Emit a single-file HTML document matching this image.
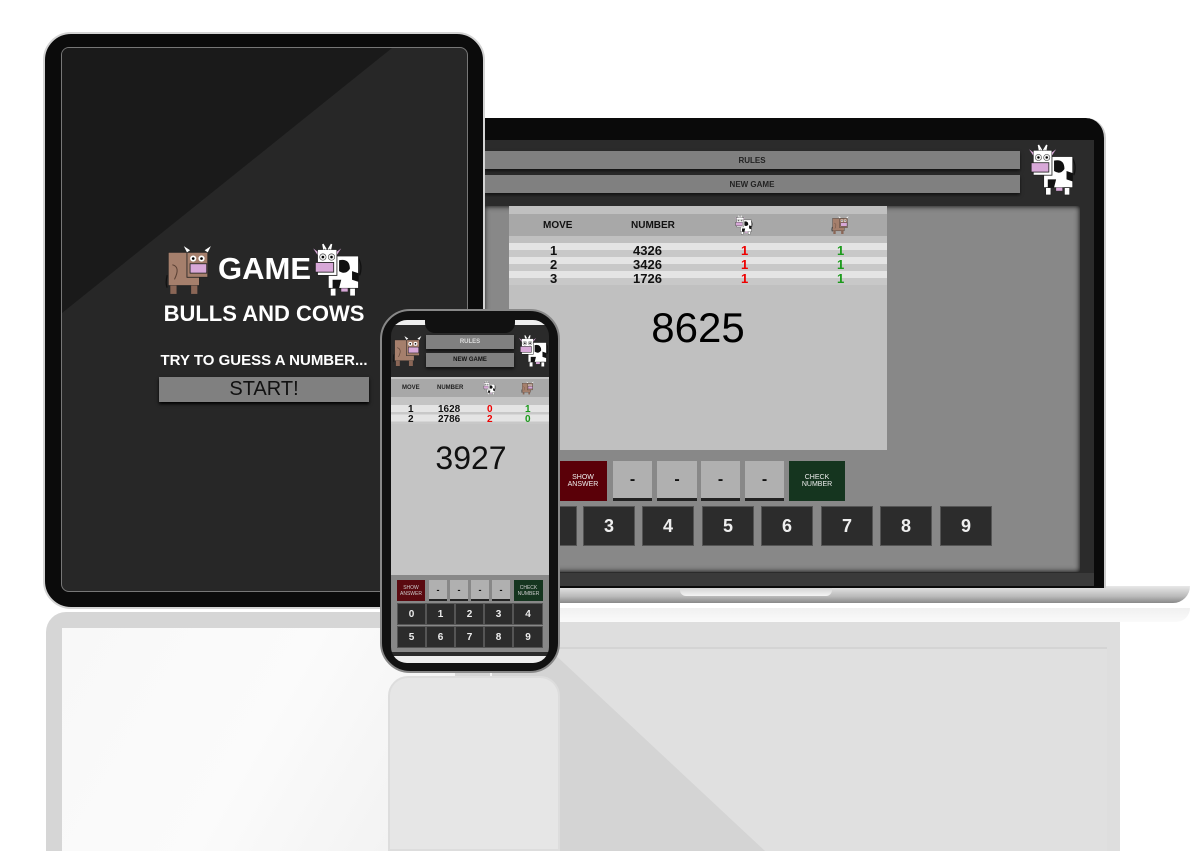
<!DOCTYPE html>
<html><head><meta charset="utf-8"><style>
*{margin:0;padding:0;box-sizing:border-box}
body{width:1203px;height:851px;background:#fff;position:relative;overflow:hidden;font-family:"Liberation Sans",sans-serif}
.a{position:absolute}
.c{display:flex;align-items:center;justify-content:center;text-align:center}
.bar{background:#808080;color:#222;font-weight:bold;box-shadow:0 2px 3px rgba(0,0,0,.6)}
.dig{background:#2c2c2c;color:#eee;font-weight:bold;border:1px solid #555}
.dash{background:#b0b0b0;border-bottom:3px solid #222;color:#111;font-weight:bold}
</style></head><body>
<svg width="0" height="0" style="position:absolute">
<defs>
<symbol id="bull" viewBox="0 0 46 50">
<path d="M3 30 Q1 38 3 42" stroke="#111" stroke-width="1.2" fill="none"/>
<rect x="4" y="8" width="30" height="32" fill="#a57f6c" stroke="#222" stroke-width=".8"/>
<path d="M8 20 Q16 22 10 34" stroke="#5a4034" fill="none" stroke-width="1"/>
<rect x="6" y="40" width="6" height="8" fill="#8a6656"/><rect x="26" y="40" width="6" height="8" fill="#8a6656"/>
<rect x="22" y="8" width="20" height="24" fill="#a57f6c" stroke="#222" stroke-width=".8"/>
<path d="M22 8 L19 2 L25 6Z M42 8 L45 2 L39 6Z" fill="#fff"/>
<circle cx="28" cy="14" r="3" fill="#fff"/><circle cx="36" cy="14" r="3" fill="#fff"/>
<circle cx="28" cy="14" r="1.3" fill="#000"/><circle cx="36" cy="14" r="1.3" fill="#000"/>
<rect x="25" y="19" width="16" height="9" fill="#d8a8d8" stroke="#222" stroke-width=".8"/>
</symbol>
<symbol id="cow" viewBox="0 0 46 50">
<path d="M42 14 Q46 22 43 30" stroke="#111" stroke-width="1.2" fill="none"/>
<rect x="14" y="12" width="28" height="30" fill="#fff" stroke="#222" stroke-width=".8"/>
<path d="M24 16 Q34 14 34 24 Q30 30 24 26Z M36 26 L42 28 L42 36 L36 34Z M18 34 L26 34 L24 42 L18 42Z" fill="#111"/>
<rect x="16" y="42" width="5" height="7" fill="#fff" stroke="#222" stroke-width=".6"/><rect x="34" y="42" width="5" height="7" fill="#fff" stroke="#222" stroke-width=".6"/>
<rect x="26" y="42" width="6" height="3" fill="#d8a8d8"/>
<rect x="4" y="6" width="18" height="24" fill="#fff" stroke="#222" stroke-width=".8"/>
<path d="M4 8 L0 5 L4 11Z M22 8 L26 5 L22 11Z" fill="#d8a8d8"/>
<path d="M10 6 L9 1 L12 6 M16 6 L17 1 L14 6" stroke="#fff" stroke-width="1.4"/>
<circle cx="9" cy="13" r="3" fill="#eee" stroke="#333" stroke-width=".5"/><circle cx="17" cy="13" r="3" fill="#eee" stroke="#333" stroke-width=".5"/>
<circle cx="9" cy="13" r="1.2" fill="#000"/><circle cx="17" cy="13" r="1.2" fill="#000"/>
<rect x="2" y="18" width="17" height="9" fill="#d8a8d8" stroke="#222" stroke-width=".8"/>
</symbol>
</defs></svg>

<!-- reflections -->
<div class="a" style="left:470px;top:608px;width:720px;height:14px;background:linear-gradient(#f0f0f0,#fafafa);border-radius:0 0 20px 0"></div>
<div class="a" style="left:470px;top:622px;width:650px;height:229px;background:#dedede"></div>
<div class="a" style="left:485px;top:647px;width:622px;height:204px;background:#e0e0e0;border-top:2px solid #d4d4d4"></div>
<svg class="a" style="left:0;top:0" width="1203" height="851"><polygon points="470,622 520,622 765,851 470,851" fill="#d4d4d4"/><line x1="491" y1="622" x2="491" y2="851" stroke="#f4f4f4" stroke-width="2"/></svg>
<div class="a" style="left:46px;top:612px;width:424px;height:239px;background:#d6d6d6;border-radius:20px 20px 0 0"></div>
<div class="a" style="left:62px;top:628px;width:393px;height:223px;background:linear-gradient(120deg,#f8f8f8,#fbfbfb 50%,#f0f0f0)"></div>
<div class="a" style="left:388px;top:676px;width:172px;height:175px;background:#e6e6e6;border:2px solid #ddd;border-radius:20px 20px 0 0"></div>

<!-- laptop -->
<div class="a" style="left:470px;top:586px;width:720px;height:17px;background:linear-gradient(#e8e8e8,#bbb 60%,#888);border-radius:0 0 40px 20px"></div>
<div class="a" style="left:680px;top:586px;width:152px;height:10px;background:linear-gradient(#ccc,#f4f4f4);border-radius:0 0 6px 6px"></div>
<div class="a" style="left:470px;top:118px;width:636px;height:470px;background:#0a0a0a;border-radius:0 20px 0 0;border-right:2px solid #ccc"></div>
<div class="a" style="left:484px;top:140px;width:610px;height:436px;background:#2b2b2b"></div>
<div class="a c bar" style="left:484px;top:151px;width:536px;height:18px;font-size:8px">RULES</div>
<div class="a c bar" style="left:484px;top:175px;width:536px;height:18px;font-size:8px">NEW GAME</div>
<svg class="a" style="left:1029px;top:144px" width="48" height="52"><use href="#cow"/></svg>
<div class="a" style="left:484px;top:206px;width:596px;height:366px;background:#888;box-shadow:inset 0 0 6px #000"></div>
<div class="a" style="left:509px;top:206px;width:378px;height:244px;background:#c0c0c0"></div>
<div class="a" style="left:509px;top:214px;width:378px;height:22px;background:#a8a8a8;font-size:10px;font-weight:bold;color:#111">
<span class="a" style="left:34px;top:6px">MOVE</span><span class="a" style="left:122px;top:6px">NUMBER</span>
<svg class="a" style="left:226px;top:1px" width="18" height="20"><use href="#cow"/></svg>
<svg class="a" style="left:322px;top:1px" width="18" height="20"><use href="#bull"/></svg></div>
<div class="a" style="left:509px;top:243px;width:378px;height:42px;background:repeating-linear-gradient(#e4e4e4 0 7px,#c8c8c8 7px 14px);font-size:13px;font-weight:bold;line-height:14px;color:#111">
<div class="a" style="left:41px;top:1px">1<br>2<br>3</div><div class="a" style="left:124px;top:1px">4326<br>3426<br>1726</div>
<div class="a" style="left:232px;top:1px;color:#e00">1<br>1<br>1</div><div class="a" style="left:328px;top:1px;color:#1a9a1a">1<br>1<br>1</div></div>
<div class="a c" style="left:600px;top:304px;width:196px;height:48px;font-size:42px;color:#000">8625</div>
<div class="a c" style="left:559px;top:461px;width:48px;height:40px;background:#5a0008;color:#eee;font-size:7px">SHOW<br>ANSWER</div>
<div class="a c dash" style="left:613px;top:461px;width:39px;height:40px">-</div>
<div class="a c dash" style="left:657px;top:461px;width:40px;height:40px">-</div>
<div class="a c dash" style="left:701px;top:461px;width:39px;height:40px">-</div>
<div class="a c dash" style="left:745px;top:461px;width:39px;height:40px">-</div>
<div class="a c" style="left:789px;top:461px;width:56px;height:40px;background:#15351f;color:#eee;font-size:7px">CHECK<br>NUMBER</div>
<div class="a dig" style="left:540px;top:506px;width:37px;height:40px"></div>
<div class="a c dig" style="left:583px;top:506px;width:52px;height:40px;font-size:18px">3</div>
<div class="a c dig" style="left:642px;top:506px;width:52px;height:40px;font-size:18px">4</div>
<div class="a c dig" style="left:702px;top:506px;width:52px;height:40px;font-size:18px">5</div>
<div class="a c dig" style="left:761px;top:506px;width:52px;height:40px;font-size:18px">6</div>
<div class="a c dig" style="left:821px;top:506px;width:52px;height:40px;font-size:18px">7</div>
<div class="a c dig" style="left:880px;top:506px;width:52px;height:40px;font-size:18px">8</div>
<div class="a c dig" style="left:940px;top:506px;width:52px;height:40px;font-size:18px">9</div>
<div class="a" style="left:484px;top:573px;width:610px;height:13px;background:#3a3a3a"></div>

<!-- tablet -->
<div class="a" style="left:43px;top:32px;width:442px;height:577px;background:#0b0b0b;border-radius:28px;border:2px solid #d4d4d4"></div>
<div class="a" style="left:61px;top:47px;width:407px;height:545px;border:1px solid #777;border-radius:8px;background:#272727;overflow:hidden">
<svg class="a" style="left:0;top:0" width="407" height="545"><polygon points="0,0 330,0 0,265" fill="#1a1a1a"/></svg></div>
<svg class="a" style="left:163px;top:244px" width="50" height="52"><use href="#bull"/></svg>
<div class="a" style="left:218px;top:251px;font-size:31px;font-weight:bold;color:#fff">GAME</div>
<svg class="a" style="left:313px;top:243px" width="50" height="54"><use href="#cow"/></svg>
<div class="a c" style="left:130px;top:300px;width:268px;height:28px;font-size:22px;font-weight:bold;color:#fff">BULLS AND COWS</div>
<div class="a c" style="left:130px;top:350px;width:268px;height:20px;font-size:15px;font-weight:bold;color:#fff">TRY TO GUESS A NUMBER...</div>
<div class="a c" style="left:159px;top:377px;width:210px;height:25px;background:#808080;font-size:20px;color:#111;box-shadow:0 2px 3px #000">START!</div>

<!-- phone -->
<div class="a" style="left:380px;top:309px;width:180px;height:364px;background:#111;border-radius:30px;border:2px solid #888"></div>
<div class="a" style="left:391px;top:320px;width:158px;height:343px;background:#2a2a2a;border-radius:16px;overflow:hidden">
<div class="a" style="left:0;top:0;width:158px;height:5px;background:#eee"></div>
<div class="a" style="left:34px;top:0;width:90px;height:13px;background:#111;border-radius:0 0 10px 10px"></div>
<svg class="a" style="left:1px;top:14px" width="30" height="34"><use href="#bull"/></svg>
<div class="a c bar" style="left:35px;top:15px;width:88px;height:14px;font-size:6px;color:#ddd">RULES</div>
<div class="a c bar" style="left:35px;top:33px;width:88px;height:14px;font-size:6px;color:#111">NEW GAME</div>
<svg class="a" style="left:128px;top:14px" width="30" height="34"><use href="#cow"/></svg>
<div class="a" style="left:0;top:57px;width:158px;height:198px;background:#c4c4c4"></div>
<div class="a" style="left:0;top:59px;width:158px;height:18px;background:#a8a8a8;font-size:6px;font-weight:bold;color:#222">
<span class="a" style="left:11px;top:6px">MOVE</span><span class="a" style="left:46px;top:6px">NUMBER</span>
<svg class="a" style="left:92px;top:2px" width="13" height="14"><use href="#cow"/></svg>
<svg class="a" style="left:130px;top:2px" width="13" height="14"><use href="#bull"/></svg></div>
<div class="a" style="left:0;top:85px;width:158px;height:19px;background:repeating-linear-gradient(#e4e4e4 0 7px,#c8c8c8 7px 9.5px);font-size:10px;font-weight:bold;line-height:10px;color:#111">
<div class="a" style="left:17px;top:0">1<br>2</div><div class="a" style="left:47px;top:0">1628<br>2786</div>
<div class="a" style="left:96px;top:0;color:#e00">0<br>2</div><div class="a" style="left:134px;top:0;color:#1a9a1a">1<br>0</div></div>
<div class="a c" style="left:30px;top:120px;width:100px;height:36px;font-size:32px;color:#111">3927</div>
<div class="a" style="left:0;top:255px;width:158px;height:77px;background:#888"></div>
<div class="a c" style="left:6px;top:260px;width:28px;height:21px;background:#5a0a10;color:#ccc;font-size:5px">SHOW<br>ANSWER</div>
<div class="a c dash" style="left:38px;top:260px;width:18px;height:21px;font-size:9px;border-bottom-width:2px">-</div>
<div class="a c dash" style="left:59px;top:260px;width:18px;height:21px;font-size:9px;border-bottom-width:2px">-</div>
<div class="a c dash" style="left:80px;top:260px;width:18px;height:21px;font-size:9px;border-bottom-width:2px">-</div>
<div class="a c dash" style="left:101px;top:260px;width:18px;height:21px;font-size:9px;border-bottom-width:2px">-</div>
<div class="a c" style="left:123px;top:260px;width:29px;height:21px;background:#15351f;color:#ccc;font-size:5px">CHECK<br>NUMBER</div>
<div class="a c dig" style="left:6px;top:283px;width:29px;height:22px;font-size:10px">0</div>
<div class="a c dig" style="left:35px;top:283px;width:29px;height:22px;font-size:10px">1</div>
<div class="a c dig" style="left:64px;top:283px;width:29px;height:22px;font-size:10px">2</div>
<div class="a c dig" style="left:93px;top:283px;width:29px;height:22px;font-size:10px">3</div>
<div class="a c dig" style="left:122px;top:283px;width:30px;height:22px;font-size:10px">4</div>
<div class="a c dig" style="left:6px;top:306px;width:29px;height:22px;font-size:10px">5</div>
<div class="a c dig" style="left:35px;top:306px;width:29px;height:22px;font-size:10px">6</div>
<div class="a c dig" style="left:64px;top:306px;width:29px;height:22px;font-size:10px">7</div>
<div class="a c dig" style="left:93px;top:306px;width:29px;height:22px;font-size:10px">8</div>
<div class="a c dig" style="left:122px;top:306px;width:30px;height:22px;font-size:10px">9</div>
<div class="a" style="left:0;top:336px;width:158px;height:7px;background:#eee"></div>
</div>
</body></html>
